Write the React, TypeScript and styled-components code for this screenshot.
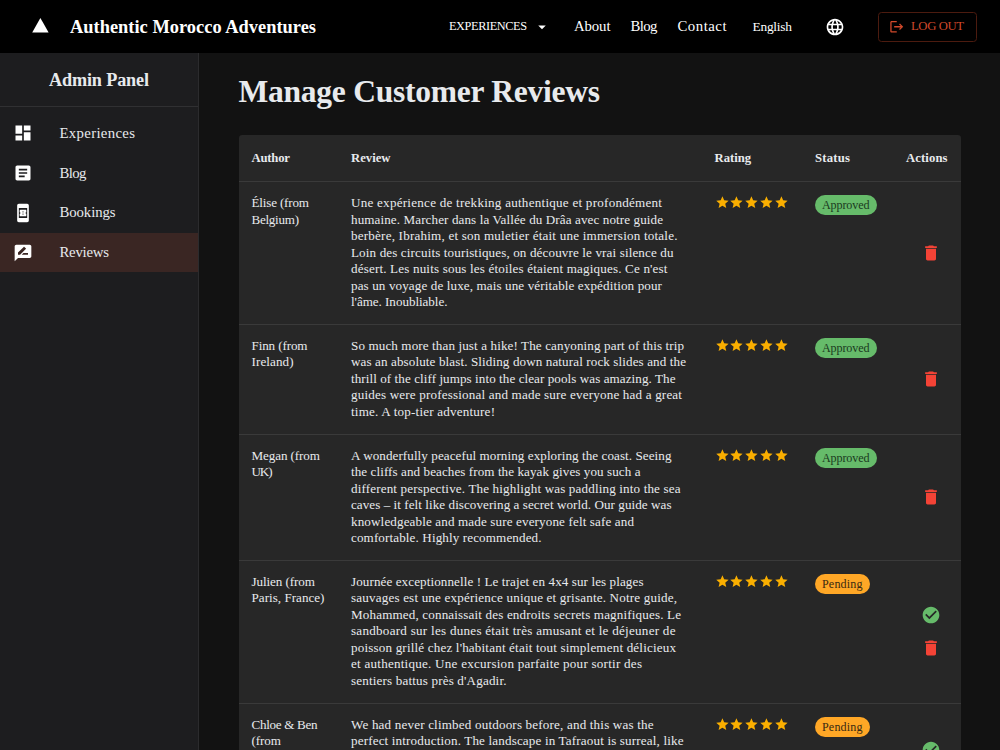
import React, { useLayoutEffect, useRef, useState } from "react";
import styled, { createGlobalStyle } from "styled-components";
import {
  MdArrowDropDown, MdArticle, MdBookOnline, MdCheckCircle, MdDashboard,
  MdDelete, MdLanguage, MdLogout, MdRateReview, MdStar,
} from "react-icons/md";

const GlobalStyle = createGlobalStyle`
  * { box-sizing: border-box; }
  html, body { margin: 0; height: 100%; overflow: hidden; background: #121212; }
  body { font-family: "Liberation Serif", serif; color: #e8eaed; }
  svg { display: block; flex-shrink: 0; }
`;

const FitBox = styled.span`
  display: block;
  white-space: nowrap;
`;
const FitText = styled.span`
  display: inline-block;
`;

/* Tracks a line of text so that it spans the given width. */
function Fit({ text, width }: { text: string; width: number }) {
  const ref = useRef<HTMLSpanElement>(null);
  const [spacing, setSpacing] = useState(0);
  useLayoutEffect(() => {
    if (!ref.current) return;
    ref.current.style.letterSpacing = "0px";
    const natural = ref.current.getBoundingClientRect().width;
    const next = (width - natural) / Math.max(1, text.length - 1);
    ref.current.style.letterSpacing = `${next}px`;
    setSpacing(next);
  }, [text, width]);
  return (
    <FitBox style={{ width }}>
      <FitText ref={ref} style={{ letterSpacing: spacing }}>{text}</FitText>
    </FitBox>
  );
}

const Page = styled.div`
  height: 750px;
  display: flex;
  flex-direction: column;
  overflow: hidden;
`;

const Header = styled.header`
  height: 53px;
  flex: none;
  display: flex;
  align-items: center;
  padding: 0 23px 0 32px;
  background: #000;
  color: #fff;
`;
const Brand = styled.div`
  display: flex;
  align-items: center;
  gap: 21px;
  margin-right: auto;
  padding-top: 1px;
  font-size: 18.4px;
  font-weight: 700;
  svg { margin-bottom: 3px; }
`;
const Nav = styled.nav`
  display: flex;
  align-items: center;
  font-size: 14.8px;
`;
const MenuButton = styled.div`
  display: flex;
  align-items: center;
  gap: 6px;
  margin-right: 23px;
  font-size: 12.3px;
`;
const Links = styled.div`
  display: flex;
  gap: 20px;
`;
const Language = styled.div`
  margin: 0 33px 0 26px;
  font-size: 13.4px;
`;
const LogoutButton = styled.div`
  display: flex;
  align-items: center;
  gap: 7px;
  width: 99px;
  height: 30px;
  margin-left: 33px;
  padding-left: 9.5px;
  border: 1px solid #4c1b0f;
  border-radius: 3.5px;
  color: #d1492b;
  font-size: 12.7px;
`;

const Body = styled.div`
  flex: 1;
  min-height: 0;
  display: flex;
`;
const Sidebar = styled.aside`
  width: 199px;
  flex: none;
  background: #1d1d1f;
  border-right: 1px solid #2b2b2d;
`;
const PanelTitle = styled.div`
  display: flex;
  align-items: center;
  justify-content: center;
  height: 54px;
  padding-top: 1px;
  border-bottom: 1px solid #303032;
  font-size: 18.2px;
  font-weight: 700;
`;
const Menu = styled.div`
  padding-top: 6.6px;
`;
const MenuItem = styled.div<{ $active?: boolean }>`
  display: flex;
  align-items: center;
  gap: 26.5px;
  height: 39.7px;
  padding-left: 13px;
  font-size: 14.8px;
  background: ${(p) => (p.$active ? "#3a2623" : "transparent")};
  svg { color: #fff; }
`;

const Main = styled.main`
  flex: 1;
  min-width: 0;
  padding: 21px 39px 0 39.5px;
`;
const Heading = styled.h1`
  margin: 0 0 26.3px;
  height: 35px;
  line-height: 35px;
  font-size: 31.5px;
  font-weight: 700;
`;
const Table = styled.div`
  background: #272727;
  border-radius: 3.3px;
`;
const Row = styled.div<{ $height: number; $head?: boolean }>`
  display: grid;
  grid-template-columns: 99.5px 363.5px 100.5px 91px 1fr;
  height: ${(p) => p.$height}px;
  border-bottom: 1px solid #3a3a3a;
  font-size: ${(p) => (p.$head ? 12.7 : 13.1)}px;
  font-weight: ${(p) => (p.$head ? 700 : 400)};
  line-height: 16.52px;
  align-items: ${(p) => (p.$head ? "center" : "stretch")};
`;
const Cell = styled.div`
  padding: 13px 0 0 13px;
`;
const HeadCell = styled.div`
  padding-left: 13px;
`;
const Stars = styled.div`
  display: flex;
  gap: 0.1px;
  color: #faaf00;
`;
const Chip = styled.div<{ $pending: boolean }>`
  display: flex;
  align-items: center;
  width: fit-content;
  height: 20px;
  padding: 0.5px 7px 0;
  border-radius: 10px;
  font-size: 12.1px;
  background: ${(p) => (p.$pending ? "#ffa726" : "#66bb6a")};
  color: ${(p) => (p.$pending ? "#3b2a12" : "#1b3a1e")};
`;
const Actions = styled.div`
  display: flex;
  flex-direction: column;
  align-items: center;
  justify-content: center;
  gap: 13.2px;
  padding-left: 8px;
`;

type LineData = [string, number];
interface Review {
  author: LineData[];
  lines: LineData[];
  pending?: boolean;
  height: number;
}

const reviews: Review[] = [
  {
    height: 142.8,
    author: [["Élise (from", 57.5], ["Belgium)", 47.5]],
    lines: [
      ["Une expérience de trekking authentique et profondément", 311],
      ["humaine. Marcher dans la Vallée du Drâa avec notre guide", 312],
      ["berbère, Ibrahim, et son muletier était une immersion totale.", 326.5],
      ["Loin des circuits touristiques, on découvre le vrai silence du", 322.5],
      ["désert. Les nuits sous les étoiles étaient magiques. Ce n'est", 316.5],
      ["pas un voyage de luxe, mais une véritable expédition pour", 311],
      ["l'âme. Inoubliable.", 96.5],
    ],
  },
  {
    height: 109.8,
    author: [["Finn (from", 56], ["Ireland)", 42]],
    lines: [
      ["So much more than just a hike! The canyoning part of this trip", 333],
      ["was an absolute blast. Sliding down natural rock slides and the", 335],
      ["thrill of the cliff jumps into the clear pools was amazing. The", 324.5],
      ["guides were professional and made sure everyone had a great", 331],
      ["time. A top-tier adventure!", 144],
    ],
  },
  {
    height: 126.3,
    author: [["Megan (from", 68.5], ["UK)", 21]],
    lines: [
      ["A wonderfully peaceful morning exploring the coast. Seeing", 320.5],
      ["the cliffs and beaches from the kayak gives you such a", 289.5],
      ["different perspective. The highlight was paddling into the sea", 329.5],
      ["caves – it felt like discovering a secret world. Our guide was", 320.5],
      ["knowledgeable and made sure everyone felt safe and", 283],
      ["comfortable. Highly recommended.", 190.5],
    ],
  },
  {
    height: 142.8,
    pending: true,
    author: [["Julien (from", 63.5], ["Paris, France)", 73]],
    lines: [
      ["Journée exceptionnelle ! Le trajet en 4x4 sur les plages", 292.5],
      ["sauvages est une expérience unique et grisante. Notre guide,", 326],
      ["Mohammed, connaissait des endroits secrets magnifiques. Le", 330],
      ["sandboard sur les dunes était très amusant et le déjeuner de", 324.5],
      ["poisson grillé chez l'habitant était tout simplement délicieux", 325],
      ["et authentique. Une excursion parfaite pour sortir des", 291],
      ["sentiers battus près d'Agadir.", 155.5],
    ],
  },
  {
    height: 126.3,
    pending: true,
    author: [["Chloe & Ben", 66], ["(from", 29.5]],
    lines: [
      ["We had never climbed outdoors before, and this was the", 302.5],
      ["perfect introduction. The landscape in Tafraout is surreal, like", 332.5],
    ],
  },
];

const menu = [
  { label: "Experiences", width: 75.5, Icon: MdDashboard },
  { label: "Blog", width: 27, Icon: MdArticle },
  { label: "Bookings", width: 56, Icon: MdBookOnline },
  { label: "Reviews", width: 49.5, Icon: MdRateReview, active: true },
];

const columns: LineData[] = [
  ["Author", 38.5], ["Review", 39.5], ["Rating", 36.5], ["Status", 35], ["Actions", 41.5],
];

function ReviewRow({ review }: { review: Review }) {
  const pending = !!review.pending;
  return (
    <Row $height={review.height}>
      <Cell>{review.author.map(([t, w]) => <Fit key={t} text={t} width={w} />)}</Cell>
      <Cell>{review.lines.map(([t, w]) => <Fit key={t} text={t} width={w} />)}</Cell>
      <Cell>
        <Stars>{[0, 1, 2, 3, 4].map((i) => <MdStar key={i} size={14.85} />)}</Stars>
      </Cell>
      <Cell>
        <Chip $pending={pending}>
          <Fit text={pending ? "Pending" : "Approved"} width={pending ? 40.5 : 47.5} />
        </Chip>
      </Cell>
      <Actions>
        {pending && <MdCheckCircle size={20} color="#66bb6a" />}
        <MdDelete size={20} color="#f44336" />
      </Actions>
    </Row>
  );
}

export default function App() {
  return (
    <>
      <GlobalStyle />
      <Page>
        <Header>
          <Brand>
            <svg width="17" height="17" viewBox="0 0 17 17">
              <path d="M8.4 1 L16.6 15.5 H0.2 Z" fill="#fff" />
            </svg>
            <Fit text="Authentic Morocco Adventures" width={246} />
          </Brand>
          <Nav>
            <MenuButton>
              <Fit text="EXPERIENCES" width={78} />
              <MdArrowDropDown size={18} />
            </MenuButton>
            <Links>
              <Fit text="About" width={36.5} />
              <Fit text="Blog" width={27} />
              <Fit text="Contact" width={49} />
            </Links>
            <Language><Fit text="English" width={39.5} /></Language>
            <MdLanguage size={20} />
            <LogoutButton>
              <MdLogout size={15.5} />
              <Fit text="LOG OUT" width={53} />
            </LogoutButton>
          </Nav>
        </Header>
        <Body>
          <Sidebar>
            <PanelTitle><Fit text="Admin Panel" width={100} /></PanelTitle>
            <Menu>
              {menu.map(({ label, width, Icon, active }) => (
                <MenuItem key={label} $active={active}>
                  <Icon size={20} />
                  <Fit text={label} width={width} />
                </MenuItem>
              ))}
            </Menu>
          </Sidebar>
          <Main>
            <Heading><Fit text="Manage Customer Reviews" width={361.5} /></Heading>
            <Table>
              <Row $height={46.7} $head>
                {columns.map(([t, w]) => (
                  <HeadCell key={t}><Fit text={t} width={w} /></HeadCell>
                ))}
              </Row>
              {reviews.map((r) => <ReviewRow key={r.author[0][0]} review={r} />)}
            </Table>
          </Main>
        </Body>
      </Page>
    </>
  );
}
